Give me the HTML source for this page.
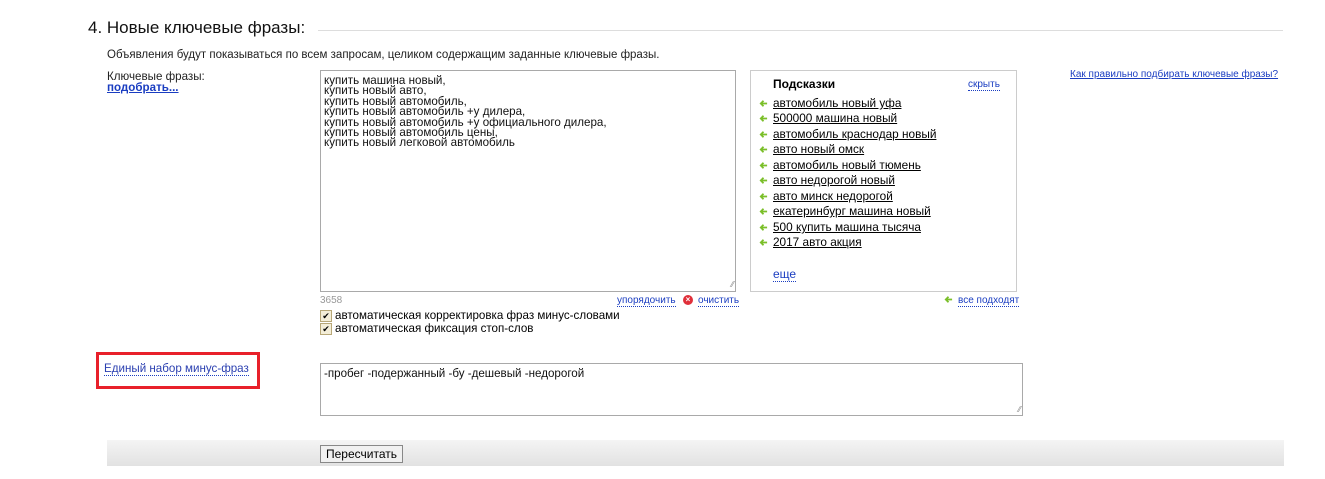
<!DOCTYPE html>
<html><head><meta charset="utf-8"><style>
body{margin:0;width:1325px;height:479px;background:#fff;font-family:"Liberation Sans",Arial,sans-serif;position:relative;overflow:hidden;color:#000}
.a{position:absolute;white-space:nowrap}
.ta{position:absolute;border:1px solid #a9a9a9;box-sizing:border-box;font-size:11.6px;padding:2px 3px}
.hint{position:absolute;left:759px;font-size:11.8px;color:#000}
.hint i{display:inline-block;width:14px;font-style:normal;vertical-align:-1px}
.hint u{text-decoration:underline}
.dot{border-bottom:1px dotted #1a3dc1;color:#1a3dc1}
</style></head><body>
<div class="a" style="left:88px;top:18px;font-size:17px;color:#111">4. Новые ключевые фразы:</div>
<div class="a" style="left:318px;top:30px;width:965px;height:1px;background:#ddd"></div>
<div class="a" style="left:107px;top:49px;font-size:11.5px;color:#222">Объявления будут показываться по всем запросам, целиком содержащим заданные ключевые фразы.</div>
<div class="a" style="left:107px;top:70px;font-size:11.6px;color:#222">Ключевые фразы:</div>
<div class="a" style="left:107px;top:81px;font-size:11.6px;font-weight:bold;color:#1a3dc1;text-decoration:underline">подобрать...</div>
<div class="ta" style="left:320px;top:70px;width:416px;height:222px;line-height:10.4px;padding-top:5px;color:#111">купить машина новый,<br>купить новый авто,<br>купить новый автомобиль,<br>купить новый автомобиль +у дилера,<br>купить новый автомобиль +у официального дилера,<br>купить новый автомобиль цены,<br>купить новый легковой автомобиль
<span style="position:absolute;right:1px;bottom:1px;font-size:8px;color:#888">⁄⁄</span></div>
<div class="a" style="left:750px;top:70px;width:267px;height:222px;border:1px solid #ccc;box-sizing:border-box"></div>
<div class="a" style="left:773px;top:77px;font-size:12px;font-weight:bold">Подсказки</div>
<div class="a" style="left:968px;top:79px;font-size:10px"><span class="dot">скрыть</span></div>
<svg width="0" height="0" style="position:absolute"><defs><symbol id="ar" viewBox="0 0 10 10"><path d="M9 5H2M5 2L2 5L5 8" stroke="#7bbf2a" stroke-width="2" fill="none"/></symbol></defs></svg>
<div class="hint" style="top:96px"><i><svg width="9" height="9"><use href="#ar"/></svg></i><u>автомобиль новый уфа</u></div>
<div class="hint" style="top:111px"><i><svg width="9" height="9"><use href="#ar"/></svg></i><u>500000 машина новый</u></div>
<div class="hint" style="top:127px"><i><svg width="9" height="9"><use href="#ar"/></svg></i><u>автомобиль краснодар новый</u></div>
<div class="hint" style="top:142px"><i><svg width="9" height="9"><use href="#ar"/></svg></i><u>авто новый омск</u></div>
<div class="hint" style="top:158px"><i><svg width="9" height="9"><use href="#ar"/></svg></i><u>автомобиль новый тюмень</u></div>
<div class="hint" style="top:173px"><i><svg width="9" height="9"><use href="#ar"/></svg></i><u>авто недорогой новый</u></div>
<div class="hint" style="top:189px"><i><svg width="9" height="9"><use href="#ar"/></svg></i><u>авто минск недорогой</u></div>
<div class="hint" style="top:204px"><i><svg width="9" height="9"><use href="#ar"/></svg></i><u>екатеринбург машина новый</u></div>
<div class="hint" style="top:220px"><i><svg width="9" height="9"><use href="#ar"/></svg></i><u>500 купить машина тысяча</u></div>
<div class="hint" style="top:235px"><i><svg width="9" height="9"><use href="#ar"/></svg></i><u>2017 авто акция</u></div>
<div class="a" style="left:773px;top:267px;font-size:12px"><span class="dot">еще</span></div>
<div class="a" style="left:1070px;top:69px;font-size:10px;color:#1a3dc1;text-decoration:underline">Как правильно подбирать ключевые фразы?</div>
<div class="a" style="left:320px;top:295px;font-size:10px;color:#999">3658</div>
<div class="a" style="left:617px;top:295px;font-size:10px"><span class="dot">упорядочить</span></div>
<div class="a" style="left:683px;top:295px;width:10px;height:10px;border-radius:50%;background:#e0303a;color:#fff;font-size:8px;line-height:10px;text-align:center;font-weight:bold">×</div>
<div class="a" style="left:698px;top:295px;font-size:10px"><span class="dot">очистить</span></div>
<svg class="a" style="left:944px;top:295px" width="9" height="9"><use href="#ar"/></svg>
<div class="a" style="left:958px;top:295px;font-size:10px"><span class="dot">все подходят</span></div>
<div class="a" style="left:320px;top:310px;width:10px;height:10px;border:1px solid #b8a878;background:#f4eed8;font-size:9px;line-height:10px;text-align:center">✔</div>
<div class="a" style="left:335px;top:309px;font-size:11.6px">автоматическая корректировка фраз минус-словами</div>
<div class="a" style="left:320px;top:323px;width:10px;height:10px;border:1px solid #b8a878;background:#f4eed8;font-size:9px;line-height:10px;text-align:center">✔</div>
<div class="a" style="left:335px;top:322px;font-size:11.6px">автоматическая фиксация стоп-слов</div>
<div class="a" style="left:96px;top:352px;width:164px;height:37px;border:3px solid #e8202a;box-sizing:border-box"></div>
<div class="a" style="left:104px;top:362px;font-size:11.6px"><span class="dot" style="color:#2a3fb0">Единый набор минус-фраз</span></div>
<div class="ta" style="left:320px;top:363px;width:703px;height:53px;color:#111;padding-top:3px">-пробег -подержанный -бу -дешевый -недорогой
<span style="position:absolute;right:1px;bottom:1px;font-size:8px;color:#888">⁄⁄</span></div>
<div class="a" style="left:107px;top:440px;width:1177px;height:26px;background:linear-gradient(#f4f4f4,#e2e2e2)"></div>
<div class="a" style="left:320px;top:445px;width:83px;height:18px;border:1px solid #888;background:#f0f0f0;box-sizing:border-box;font-size:12px;text-align:center;line-height:16px">Пересчитать</div>
</body></html>
